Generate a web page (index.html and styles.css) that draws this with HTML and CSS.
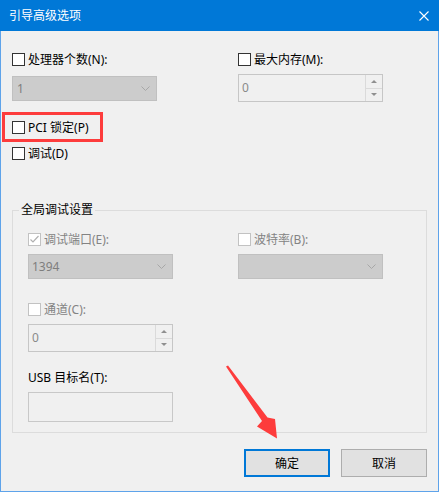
FILE: index.html
```html
<!DOCTYPE html>
<html lang="zh-CN">
<head>
<meta charset="utf-8">
<title>引导高级选项</title>
<link rel="stylesheet" href="styles.css">
</head>
<body>
<div class="window">
  <div class="titlebar">
    <span class="title">引导高级选项</span>
    <svg class="close" width="10" height="10" viewBox="0 0 10 10"><path d="M0.5 0.5 L9.5 9.5 M9.5 0.5 L0.5 9.5" stroke="#fff" stroke-width="1.1" fill="none"/></svg>
  </div>
  <div class="content">
    <div class="top">
      <div class="col">
        <div class="chk"><span class="box"></span><span>处理器个数(N):</span></div>
        <div class="combo combo-top"><span class="ctext">1</span><svg class="chev" width="9" height="5" viewBox="0 0 9 5"><path d="M0.5 0.5 L4.5 4.5 L8.5 0.5" stroke="#a7a7a7" fill="none"/></svg></div>
      </div>
      <div class="col">
        <div class="chk"><span class="box"></span><span>最大内存(M):</span></div>
        <div class="spinner spinner-top"><span class="val">0</span><span class="spin"><span class="half"><i class="up"></i></span><span class="half"><i class="down"></i></span></span></div>
      </div>
    </div>
    <div class="chk pci"><span class="box"></span><span>PCI 锁定(P)</span></div>
    <div class="chk debug"><span class="box"></span><span>调试(D)</span></div>

    <fieldset class="group">
      <legend>全局调试设置</legend>
      <div class="grid2">
        <div class="col">
          <div class="chk dis"><span class="box"><svg width="11" height="11" viewBox="0 0 11 11"><path d="M1.5 5.5 L4 8 L9.5 2" stroke="#b0b0b0" stroke-width="1.2" fill="none"/></svg></span><span>调试端口(E):</span></div>
          <div class="combo combo-in"><span class="ctext">1394</span><svg class="chev" width="9" height="5" viewBox="0 0 9 5"><path d="M0.5 0.5 L4.5 4.5 L8.5 0.5" stroke="#a7a7a7" fill="none"/></svg></div>
        </div>
        <div class="col">
          <div class="chk dis"><span class="box"></span><span>波特率(B):</span></div>
          <div class="combo combo-in"><span class="ctext"></span><svg class="chev" width="9" height="5" viewBox="0 0 9 5"><path d="M0.5 0.5 L4.5 4.5 L8.5 0.5" stroke="#a7a7a7" fill="none"/></svg></div>
        </div>
      </div>
      <div class="chk dis chan"><span class="box"></span><span>通道(C):</span></div>
      <div class="spinner spinner-in"><span class="val">0</span><span class="spin"><span class="half"><i class="up"></i></span><span class="half"><i class="down"></i></span></span></div>
      <div class="usb-label">USB 目标名(T):</div>
      <div class="textbox"></div>
    </fieldset>

    <div class="buttons">
      <button class="btn default">确定</button>
      <button class="btn">取消</button>
    </div>

    <span class="highlight"></span>
  </div>
  <svg class="arrow" width="439" height="492" viewBox="0 0 439 492">
    <polygon points="226,366.5 228,365.5 267.5,417.5 275,419 277,438.5 257,426.5 262,421" fill="#fd3c3c"/>
  </svg>
</div>
</body>
</html>
```
FILE: styles.css
```css
html, body {
  margin: 0;
  padding: 0;
  background: #ffffff;
}
body {
  font-family: "Noto Sans", "Noto Sans CJK SC", sans-serif;
  font-size: 12px;
  color: #000;
}
.window {
  position: relative;
  width: 439px;
  height: 492px;
  display: flex;
  flex-direction: column;
}
.titlebar {
  height: 31px;
  flex: none;
  background: #0078d7;
  color: #fff;
  display: flex;
  align-items: center;
  justify-content: space-between;
  padding: 0 10px 0 9px;
  box-sizing: border-box;
}
.title {
  font-size: 12px;
  line-height: 16px;
}
.close { display: block; }
.content {
  position: relative;
  flex: 1;
  background: #f0f0f0;
  border: 1px solid #5ea3ea;
  border-top: 0;
  padding: 22px 11px 0 11px;
  display: flex;
  flex-direction: column;
  align-items: flex-start;
}
.top {
  display: grid;
  grid-template-columns: 226px 145px;
}
.col {
  display: flex;
  flex-direction: column;
  align-items: flex-start;
}
.chk {
  display: flex;
  align-items: center;
  gap: 3px;
  height: 13px;
  line-height: 13px;
  white-space: nowrap;
}
.box {
  width: 13px;
  height: 13px;
  box-sizing: border-box;
  border: 1px solid #333;
  background: #fff;
  flex: none;
  display: flex;
  align-items: center;
  justify-content: center;
}
.box svg { display: block; }
.chk.dis { color: #838383; }
.chk.dis .box { border-color: #c2c2c2; }
.combo {
  width: 145px;
  height: 25px;
  box-sizing: border-box;
  background: #cccccc;
  border: 1px solid #c0c0c0;
  display: flex;
  align-items: center;
  justify-content: space-between;
  padding: 0 6px 0 4px;
  color: #7e7e7e;
  line-height: 16px;
}
.combo-top { margin-top: 10px; }
.combo-in { margin-top: 8px; padding-left: 3px; }
.chev { display: block; }
.spinner {
  width: 145px;
  height: 28px;
  box-sizing: border-box;
  border: 1px solid #c6c6c6;
  background: #f0f0f0;
  display: flex;
}
.spinner-top { margin-top: 8px; }
.val {
  flex: 1;
  padding-left: 3px;
  line-height: 26px;
  color: #8a8a8a;
}
.spin {
  width: 16px;
  display: flex;
  flex-direction: column;
  border-left: 1px solid #dadada;
}
.half {
  flex: 1;
  display: flex;
  align-items: center;
  justify-content: center;
}
.half + .half { border-top: 1px solid #dadada; }
.up, .down {
  width: 0;
  height: 0;
  border-left: 3px solid transparent;
  border-right: 3px solid transparent;
}
.up { border-bottom: 3px solid #8f8f8f; }
.down { border-top: 3px solid #8f8f8f; }
.pci { margin-top: 19px; }
.debug { margin-top: 13px; }
.group {
  margin: 42px 0 0 0;
  width: 415px;
  box-sizing: border-box;
  border: 1px solid #dcdcdc;
  padding: 15px 10px 10px 15px;
  min-width: 0;
}
.group legend {
  padding: 0 2px;
  margin-left: -9px;
  line-height: 16px;
  color: #000;
}
.grid2 {
  display: grid;
  grid-template-columns: 210px 145px;
}
.chan { margin-top: 24px; }
.spinner-in { margin-top: 8px; }
.usb-label {
  margin-top: 18px;
  line-height: 16px;
}
.textbox {
  margin-top: 6px;
  width: 145px;
  height: 30px;
  box-sizing: border-box;
  border: 1px solid #c8c8c8;
  background: #f0f0f0;
}
.buttons {
  align-self: stretch;
  margin-top: 16px;
  display: flex;
  justify-content: flex-end;
  gap: 11px;
}
.btn {
  width: 86px;
  height: 28px;
  box-sizing: border-box;
  border: 1px solid #adadad;
  background: #e1e1e1;
  font-family: "Noto Sans", "Noto Sans CJK SC", sans-serif;
  font-size: 12px;
  color: #000;
  padding: 0;
  margin: 0;
}
.btn.default {
  border: 2px solid #0078d7;
}
.highlight {
  position: absolute;
  left: 1px;
  top: 81px;
  width: 101px;
  height: 30px;
  box-sizing: border-box;
  border: 3px solid #fd3c3c;
}
.arrow {
  position: absolute;
  left: 0;
  top: 0;
  pointer-events: none;
}
```
